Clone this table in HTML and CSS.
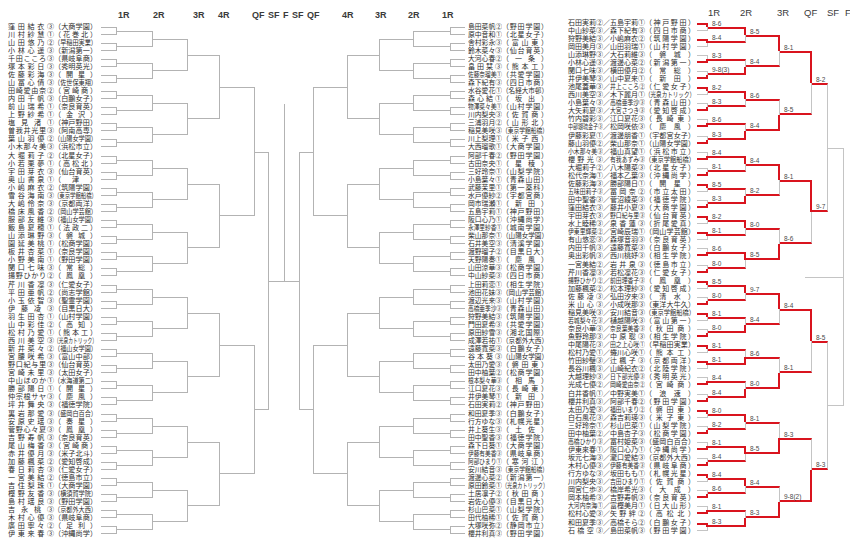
FILE: index.html
```html
<!DOCTYPE html>
<html lang="ja">
<head>
<meta charset="utf-8">
<title>トーナメント表</title>
<link rel="stylesheet" href="styles.css">
</head>
<body>
<main class="page">
  <section class="center">
    <div class="hdr">
      <span></span><span>1R</span><span>2R</span><span>3R</span><span>4R</span><span>QF</span><span>SF</span><span>F</span><span>SF</span><span>QF</span><span>4R</span><span>3R</span><span>2R</span><span>1R</span>
    </div>
    <div class="trees">
      <div class="tree lt" id="lt"></div>
      <div class="fcol"><div class="fv"></div><div class="fh"></div></div>
      <div class="tree mir" id="mt"></div>
    </div>
  </section>
  <section class="right">
    <div class="rhdr">
      <span></span><span>1R</span><span>2R</span><span>3R</span><span>QF</span><span>SF</span><span>F</span>
    </div>
    <div class="tree rt" id="rt"></div>
  </section>
</main>
<script src="app.js"></script>
</body>
</html>
```

FILE: styles.css
```css
* { box-sizing: border-box; margin: 0; padding: 0; }
html, body { background: #fff; }
body {
  width: 850px; height: 546px; overflow: hidden;
  font-family: "Liberation Sans", "Noto Sans CJK JP", sans-serif;
  color: #2b2b2b;
}
.page { display: flex; align-items: flex-start; }
.center { width: 548px; display: flex; flex-direction: column; }
.right { margin-left: 20px; display: flex; flex-direction: column; }

.hdr {
  display: grid;
  grid-template-columns: 118px 35px 40px 25px 34px 16px 15px 9px 15px 35px 33px 33px 34px 1fr;
  height: 22.5px; padding-top: 10px;
  font: bold 9px/10px "Liberation Sans", sans-serif; color: #3a3a3a;
}
.rhdr {
  display: grid;
  grid-template-columns: 140px 32px 37px 27px 23px 18px 1fr;
  height: 18.6px; padding-top: 8px;
  font: 9.5px/10px "Liberation Sans", sans-serif; color: #3a3a3a;
}

.trees { display: flex; align-items: flex-start; }
.tree { --g: #b3b3b3; --r: #d9141e; }
.rt { --g: #c4c4c4; }

.m { display: flex; }
.mir .m { flex-direction: row-reverse; }
.kids { display: flex; flex-direction: column; }
.c { display: grid; grid-template-rows: repeat(4, minmax(0, 1fr)); flex: none; }

.top, .bot { position: relative; }
.top { border-top: 1px solid var(--g); border-right: 1px solid var(--g); }
.bot { border-bottom: 1px solid var(--g); border-right: 1px solid var(--g); }
.mir .top, .mir .bot { border-right: 0; border-left: 1px solid var(--g); }

.rt .top.rh { border-top: 2px solid var(--r); }
.rt .bot.rh { border-bottom: 2px solid var(--r); }
.rt .rv { border-right: 2px solid var(--r); }

.lab {
  position: absolute; left: 4px;
  font: 6.5px/7px "Liberation Sans", sans-serif; color: #4a4a4a;
  white-space: nowrap;
}
.top > .lab { bottom: calc(100% + 2px); }
.bot > .lab { bottom: 0; }

.rt .c6 .bot::before {
  content: ""; display: block; width: 38px; margin-left: -23px;
  border-top: 1px solid var(--g);
}

/* connector widths */
.lt .c1 { width: 16px; } .lt .c2 { width: 36px; } .lt .c3 { width: 35px; }
.lt .c4 { width: 32px; } .lt .c5 { width: 35px; } .lt .c6 { width: 14px; }
.mir .c1 { width: 15px; } .mir .c2 { width: 37px; } .mir .c3 { width: 34px; }
.mir .c4 { width: 32px; } .mir .c5 { width: 34px; } .mir .c6 { width: 14px; }
.rt .c1 { width: 11px; } .rt .c2 { width: 38px; } .rt .c3 { width: 34px; }
.rt .c4 { width: 32px; } .rt .c5 { width: 16px; } .rt .c6 { width: 15px; }

.fcol { width: 30px; display: flex; flex-direction: column; --g: #b3b3b3; }
.fv { margin-top: 81.5px; height: 176.5px; width: 16px; border-right: 1px solid var(--g); }
.fh { border-top: 1px solid var(--g); }

/* entries */
.leaf {
  height: 8.0625px; display: flex; align-items: center;
  white-space: nowrap; line-height: 8px; flex: none;
}
.nm, .sc, .sl { flex: none; text-align: justify; text-align-last: justify; overflow: visible; }
.sq { display: inline-block; transform-origin: 0 50%; }

.lt .leaf { width: 101px; padding-left: 8px; padding-right: 4px; font-size: 7.1px; }
.lt .nm { width: 46px; } .lt .sc { width: 43px; }

.mir .leaf { width: 83px; padding-left: 3px; font-size: 7px; }
.mir .nm { width: 34px; } .mir .sc { width: 46px; }

.rt .leaf { width: 129px; padding-right: 2px; font-size: 7px; }
.rt .nm { width: 35px; } .rt .sl { width: 7px; } .rt .sc { width: 50px; }
```

FILE: app.js
```js
const LEFT = `窪田結衣③|大商学園
川村紗慧①|花巻北
山田悠乃②|早稲田実業
小林心遥③|新潟第一
千田こころ③|県岐阜商
塚本彩日③|秀明英光
佐藤彩海③|開星
山冨心債③|佐世保東翔
田崎愛由奈②|宮崎商
内田千帆③|白鵬女子
前山瑞希①|奈良育英
上野紗希①|金沢
塩見渚①|神戸野田
曽我井光里③|阿南高専
葉山羽優②|山陽女学園
小木那々美③|浜松市立
大堀莉子②|北星女子
小若栗夢①|高松北
宇田芽衣③|仙台育英
奥山書泉①|津
小嶋麻衣②|筑陽学園
雪谷海南③|東京学館船橋
大嶋伶奈③|京都両洋
橋床風香②|岡山学芸館
服部友維③|福山女学園
飯島夏穂①|法政二
山添琳野③|磐城
園延美桃①|松商学園
板井杏菜①|奈良学園
小野美南①|野田学園
関口七味③|常総
揚野ひかり②|鳳凰
芹川香凜③|仁愛女子
平田亜帆②|尚志学館
小玉依智③|聖霊学園
伊藤凌③|目黒日大
羽生田杏①|山村学園
山中彩佳②|高知
松村乃愛①|熊本工
西川美空③|光泉カトリック
新井菜々②|福山女学園
宮腰咲希③|富山中部
野口紀与里③|仙台育英
宮崎未里③|太田女子
中山ほのか①|水海道第二
勝部陽日①|開星
仲宗根サヤ③|慶風
坪井舞央③|福徳学院
裏岩那愛③|盛岡白百合
安原史瑶③|奏星
菅野心々夏③|鳳凰
吉野寿帆③|奈良育英
尾山梅香③|宮崎商
赤井優月③|米子北斗
加藤楓菜②|愛知啓成
春日莉杏③|仁愛女子
一宮美結②|徳島市立
吉住梨珠①|大商学園
樫野友香③|横須賀学院
島村瑶良③|野田学園
吉永桃③|京都外大西
木村心優③|県岐阜商
廣田寧々②|足利
伊東来春③|沖縄尚学`;

const MID = `島田菜帆②|野田学園
原中音和①|北星女子
舎村彩永③|富山東
鈴木菜々③|仙台育英
大河心春②|一条
畠田栞③|熊本工
佐藤奈瑠美①|共愛学園
森下紀有③|四日市商
水谷愛花①|名経大市邨
森心結①|坂出
物澤菜々美①|山村学園
川内梨央③|佐賀商
三浦羽月②|山形北
稲見美咲③|東京学館船橋
川上梨理①|米子西
大西瑠歌①|大商学園
阿部千春②|野田学園
古田奈央①|星稜
三好玲奈①|山梨学院
小島葉々①|青森山田
武藤茉里①|第一薬科
水戸優紗②|宇都宮商
岡市瑞瀬①|新田
五島宇莉①|神戸野田
阪口心乃①|沖縄尚学
永澤里紗香①|城南学園
柴山那奈①|山陽女学園
石井美空③|清溪学園
渡野瑠子②|目黒日大
天野陽奏①|慶風
山田涼華③|松商学園
中山紗菜③|四日市商
上田莉恋①|相生学院
池田花妹③|岡山学芸館
渡辺光来③|山村学園
高橋亜季沙③|青森山田
狩野美結③|筑陽学園
門田夏希③|共愛学園
原田紗雪③|湘北国際
成澤若祐①|京都外大西
遠藤寛菜③|白鵬女子
谷本葵③|山陽女学園
太田乃愛③|磐田東
田中柚葉②|松商学園
根本梨々華③|相馬
江口夏花③|長崎東
井伊美琴①|新田
石田実莉②|神戸野田
和田夏季③|白鵬女子
行方ゆな③|札幌光星
井上葵生③|土佐
田中聖香③|福徳学院
森下日葵①|大商学園
伊藤有美香③|県岐阜商
阿部ひまり①|寒河江
安川結音③|東京学館船橋
渡邊心菜②|新潟第一
原田鈴菜①|光泉カトリック
土居凛子②|秋田商
岩佐心優③|目黒日大
杉山巴菜①|山梨学院
田代柚稀①|佐賀商
大塚咲弥②|静岡市立
櫻井利真③|野田学園`;

const RIGHT = `石田実莉②|五島宇莉①|神戸野田
中山紗菜③|森下紀有③|四日市商
狩野美結③|小嶋麻衣②|筑陽学園
岡田美月③|山田羽瑞①|山村学園
山添琳野③|大石莉維③|磐城
小林心遥③|渡邊心菜②|新潟第一
関口七味③|横田優月②|常総
井伊美琴③|山中夏来①|新田
池尾蓋華③|井上こころ②|仁愛女子
西川美空③|木下麗月①|光泉カトリック
小島葉々③|高橋亜季沙③|青森山田
大矢莉夏③|大宮さつき③|愛知啓成
竹内碧彩③|江口夏花③|長崎東
中部瑚琉金子③|松岡咲依③|慶風
伊藤彩夏①|渡邊朋香①|宇都宮女子
藤山羽優②|柴山那奈①|山陽女学園
小木那々美③|福山真望①|浜松市立
櫻野光③|有我あずみ③|東京学館船橋
大堀莉子②|八木陽菜③|北星女子
松代奈海①|福本乙葉③|沖縄尚学
佐藤彩海③|勝部陽日①|開星
五味田莉子③|冨岡奈②|市立太田
田中聖香③|菅沼綾菜③|福徳学院
窪田結衣③|藤井小夏③|大商学園
宇田芽衣③|野口紀与里③|仙台育英
水上睦稀③|泉香蓮③|折尾愛真
伊東里輝菜②|宮崎辰瑞①|岡山学芸館
有山悠恋③|森塚音羽③|奈良育英
内田千帆③|遠藤寛菜③|白鵬女子
奥出彩帆③|西川桃妤③|相生学院
一宮美結②|岩井泉③|徳島市立
芹川香凜③|若松凜花③|仁愛女子
揚野ひかり②|前田理香子③|鳳凰
加藤楓菜②|松本理紗③|愛知啓成
佐藤凌③|弘田汐来③|清水
米山心③|小成咲那③|東洋大牛久
稲見美咲③|安川結音③|東京学館船橋
若城梨々花③|樋越陽咲③|富山第一
奈良小華③|奈良葉美香③|秋田商
魚野玲那③|中原聡③|相生学院
中尾陽花③|田之上心咲①|早稲田実業
松村乃愛①|蜷川心咲①|熊本工
竹田紗璧③|辻楓子③|京都両洋
長谷川楓③|山崎紀衣②|北陸学院
大越理紗③|日下部光優③|秀明英光
光成七優②|岡崎愛由奈②|宮崎商
白井香帆①|中野実美①|浪速
櫻井利真③|阿部千春②|野田学園
太田乃愛③|福田いまり②|磐田東
白石風花③|森吉莉瑛③|米子東
三好玲奈①|杉山巴菜①|山梨学院
田中柚葉②|中島杏子③|松商学園
高橋ひかり③|冨村姫菜③|盛岡白百合
伊東來春①|阪口心乃①|沖縄尚学
坂元七海③|瀧口愛結③|京都外大西
木村心優③|伊藤有美香③|県岐阜商
行方ゆな③|坂田もも①|札幌光星
川内梨央③|吉田ひまり①|佐賀商
岡宮仁歩③|橋岸希光③|大成
岡本柚希③|吉野寿帆③|奈良育英
大河内奈海①|富樫美月①|日大山形
松村心愛③|矢野絆②|高松北
和田夏季③|高橋そら②|白鵬女子
石橋空③|島田菜帆③|野田学園`;

const RES = {
  W: [
    "00110111110100110101001101110110",
    "0101010001110001",
    "01010111",
    "0001"
  ].map(s => s.split('').map(Number)),
  S: [
    ["8-6","8-4","8-3","9-8(3)","8-2","8-3","8-6","8-3","8-4","8-1","8-5","8-3","8-2","8-1","8-6","8-0",
     "8-5","8-0","8-1","8-0","8-1","8-1","8-4","8-4","8-0","8-2","8-1","8-4","8-4","8-6","8-1","8-3"],
    ["8-5","8-4","8-6","8-4","8-4","8-2","8-0","8-5","9-7","8-4","8-6","8-0","8-1","8-5","8-4","8-3"],
    ["8-1","8-5","8-1","8-6","8-4","8-1","8-3","9-8(2)"],
    ["8-2","9-7","8-5","8-3"]
  ]
};

function el(tag, cls, text) {
  const e = document.createElement(tag);
  if (cls) e.className = cls;
  if (text != null) e.textContent = text;
  return e;
}

function cell(cls, text, w, fs) {
  const d = el('div', cls);
  const n = [...text].length;
  if (n * fs > w + 0.3) {
    const s = el('span', 'sq', text);
    s.style.transform = 'scaleX(' + (w / (n * fs)).toFixed(3) + ')';
    d.append(s);
  } else {
    d.textContent = text;
  }
  return d;
}

function tree(leafFn, res) {
  function half(level, idx, side) {
    const h = el('div', side ? 'bot' : 'top');
    if (res) {
      let hr, vr;
      if (level === 1) {
        hr = vr = res.W[0][idx] === side;
      } else {
        const ch = idx * 2 + side;
        hr = level - 1 <= 4;
        vr = level <= 4 && res.W[level - 1][idx] === side;
        if (hr) h.append(el('span', 'lab', res.S[level - 2][ch]));
      }
      if (hr) h.classList.add('rh');
      if (vr) h.classList.add('rv');
    }
    return h;
  }
  function build(lo, level) {
    if (level === 0) return leafFn(lo);
    const size = 1 << level, idx = lo >> level;
    const m = el('div', 'm');
    const kids = el('div', 'kids');
    kids.append(build(lo, level - 1), build(lo + size / 2, level - 1));
    const c = el('div', 'c c' + level);
    c.append(el('div', 'sp'), half(level, idx, 0), half(level, idx, 1), el('div', 'sp'));
    m.append(kids, c);
    return m;
  }
  return build(0, 6);
}

const L = LEFT.split('\n').map(s => s.split('|'));
const M = MID.split('\n').map(s => s.split('|'));
const R = RIGHT.split('\n').map(s => s.split('|'));

document.getElementById('lt').append(tree(i => {
  const d = el('div', 'leaf');
  d.append(cell('nm', L[i][0], 46, 7.1), cell('sc', '（' + L[i][1] + '）', 43, 7.1));
  return d;
}));

document.getElementById('mt').append(tree(i => {
  const d = el('div', 'leaf');
  d.append(cell('nm', M[i][0], 34, 7), cell('sc', '（' + M[i][1] + '）', 46, 7));
  return d;
}));

document.getElementById('rt').append(tree(i => {
  const d = el('div', 'leaf');
  d.append(cell('nm', R[i][0], 35, 7), cell('sl', '／', 7, 7), cell('nm', R[i][1], 35, 7),
           cell('sc', '（' + R[i][2] + '）', 50, 7));
  return d;
}, RES));
```
